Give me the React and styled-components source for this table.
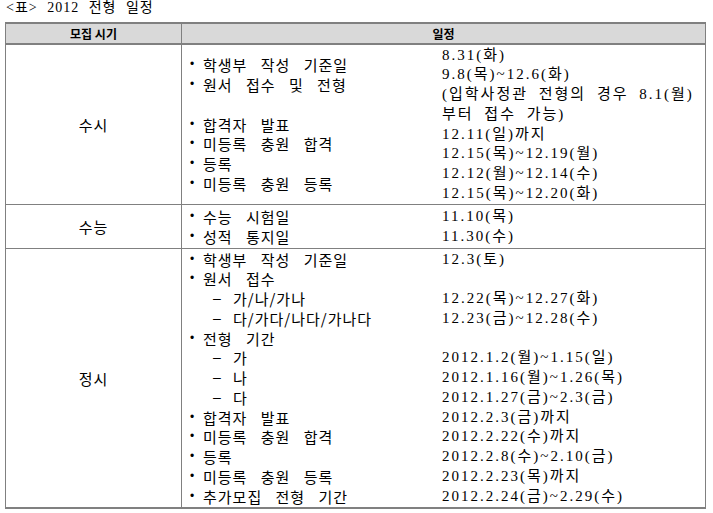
import React from 'react';
import styled, { createGlobalStyle } from 'styled-components';

const GlobalStyle = createGlobalStyle`
  html, body {
    margin: 0;
    padding: 0;
    background: #ffffff;
  }
  body {
    font-family: "Noto Sans CJK KR", "Liberation Sans", sans-serif;
    color: #000000;
  }
`;

const Page = styled.div`
  padding-left: 5px;
`;

const Caption = styled.div`
  font-family: "Liberation Serif", "Noto Sans CJK KR", serif;
  font-size: 14px;
  line-height: 16px;
  letter-spacing: 1px;
  word-spacing: 5px;
  padding: 0 0 6px 1px;
`;

const Table = styled.table`
  border-collapse: separate;
  border-spacing: 0;
  table-layout: fixed;
  width: 701px;
  border-top: 2px solid #808080;
  border-bottom: 2px solid #808080;
  border-left: 1px solid #808080;
  border-right: 1px solid #808080;
`;

const HeadCell = styled.th`
  background: #d9d9d9;
  height: 19px;
  padding: 0;
  border-bottom: 2px solid #808080;
  border-right: ${(p) => (p.$divider ? '1px solid #808080' : 'none')};
  font-size: 12px;
  font-weight: 700;
  line-height: 19px;
  text-align: center;
  vertical-align: middle;
`;

const Cell = styled.td`
  padding: 0;
  vertical-align: middle;
  border-bottom: ${(p) => (p.$last ? 'none' : '1px solid #808080')};
`;

const LabelCell = styled(Cell)`
  height: ${(p) => p.$h}px;
  border-right: 1px solid #808080;
  text-align: center;
  font-size: 15px;
  letter-spacing: 1px;
`;

const ItemsCell = styled(Cell)`
  padding-left: 8px;
  font-size: 15px;
  letter-spacing: 1px;
  word-spacing: 9px;
  line-height: 19.75px;
`;

const DatesCell = styled(Cell)`
  font-family: "Liberation Serif", "Noto Sans CJK KR", serif;
  font-size: 15px;
  letter-spacing: 2px;
  word-spacing: 5px;
  line-height: 19.75px;
`;

const Line = styled.div`
  display: flex;
  height: 19.75px;
  white-space: nowrap;
  padding-left: ${(p) => (p.$sub ? 23 : 0)}px;
`;

const Marker = styled.span`
  flex: none;
  width: ${(p) => (p.$sub ? 20 : 13)}px;
  font-family: "Liberation Sans", sans-serif;
  font-size: ${(p) => (p.$sub ? 14 : 12)}px;
  letter-spacing: 0;
`;

const schedule = [
  {
    label: '수시',
    h: 159,
    items: [
      ['학생부 작성 기준일'],
      ['원서 접수 및 전형'],
      null,
      ['합격자 발표'],
      ['미등록 충원 합격'],
      ['등록'],
      ['미등록 충원 등록'],
    ],
    dates: [
      '8.31(화)',
      '9.8(목)~12.6(화)',
      '(입학사정관 전형의 경우 8.1(월)',
      '부터 접수 가능)',
      '12.11(일)까지',
      '12.15(목)~12.19(월)',
      '12.12(월)~12.14(수)',
      '12.15(목)~12.20(화)',
    ],
  },
  {
    label: '수능',
    h: 43,
    items: [['수능 시험일'], ['성적 통지일']],
    dates: ['11.10(목)', '11.30(수)'],
  },
  {
    label: '정시',
    h: 258,
    items: [
      ['학생부 작성 기준일'],
      ['원서 접수'],
      ['가/나/가나', true],
      ['다/가다/나다/가나다', true],
      ['전형 기간'],
      ['가', true],
      ['나', true],
      ['다', true],
      ['합격자 발표'],
      ['미등록 충원 합격'],
      ['등록'],
      ['미등록 충원 등록'],
      ['추가모집 전형 기간'],
    ],
    dates: [
      '12.3(토)',
      null,
      '12.22(목)~12.27(화)',
      '12.23(금)~12.28(수)',
      null,
      '2012.1.2(월)~1.15(일)',
      '2012.1.16(월)~1.26(목)',
      '2012.1.27(금)~2.3(금)',
      '2012.2.3(금)까지',
      '2012.2.22(수)까지',
      '2012.2.8(수)~2.10(금)',
      '2012.2.23(목)까지',
      '2012.2.24(금)~2.29(수)',
    ],
  },
];

const App = () => {
  return (
    <Page>
      <GlobalStyle />
      <Caption>&lt;표&gt; 2012 전형 일정</Caption>
      <Table>
        <colgroup>
          <col style={{ width: 176 }} />
          <col style={{ width: 260 }} />
          <col style={{ width: 263 }} />
        </colgroup>
        <thead>
          <tr>
            <HeadCell $divider>모집 시기</HeadCell>
            <HeadCell colSpan={2}>일정</HeadCell>
          </tr>
        </thead>
        <tbody>
          {schedule.map((row, i) => {
            const last = i === schedule.length - 1;
            return (
              <tr key={row.label}>
                <LabelCell $h={row.h} $last={last}>{row.label}</LabelCell>
                <ItemsCell $last={last}>
                  {row.items.map((item, j) =>
                    item ? (
                      <Line key={j} $sub={item[1]}>
                        <Marker $sub={item[1]}>{item[1] ? '–' : '•'}</Marker>
                        <span>{item[0]}</span>
                      </Line>
                    ) : (
                      <Line key={j} />
                    )
                  )}
                </ItemsCell>
                <DatesCell $last={last}>
                  {row.dates.map((d, j) => (
                    <Line key={j}>{d}</Line>
                  ))}
                </DatesCell>
              </tr>
            );
          })}
        </tbody>
      </Table>
    </Page>
  );
};

export default App;
